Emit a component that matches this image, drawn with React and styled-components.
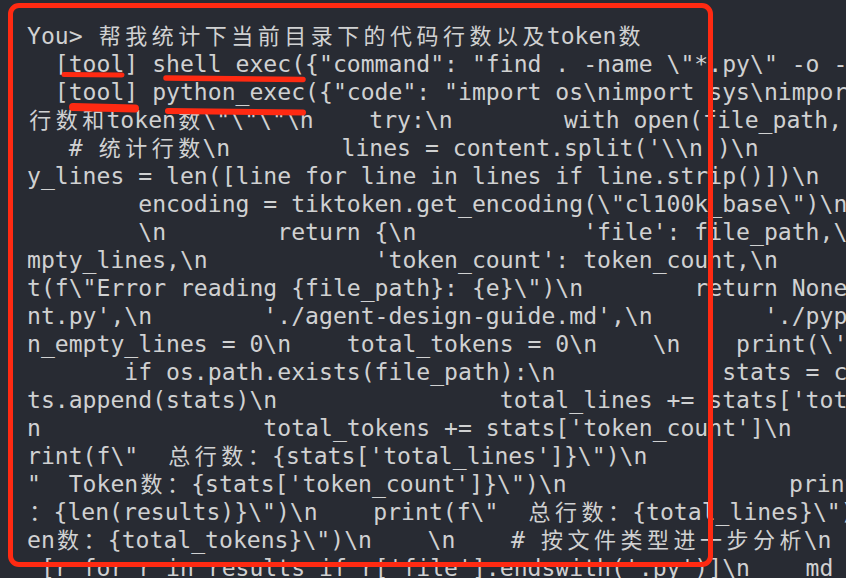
import React from "react";
import styled, { createGlobalStyle } from "styled-components";

const GlobalStyle = createGlobalStyle`
  html, body {
    margin: 0;
    padding: 0;
    background: #282b33;
  }
`;

const Screen = styled.div`
  position: relative;
  width: 846px;
  height: 578px;
  overflow: hidden;
  background: #282b33;
`;

const Terminal = styled.div`
  padding: 22px 0 0 27px;
  font-family: "DejaVu Sans Mono", "Noto Sans CJK SC", monospace;
  font-size: 23.1px;
  line-height: 28px;
  color: #d0d1d2;
`;

const Line = styled.div`
  white-space: pre;
  height: 28px;
`;

const Wide = styled.span`
  display: inline-block;
  width: 2ch;
  text-align: center;
  font-size: 22px;
`;

const Frame = styled.div`
  position: absolute;
  left: 8px;
  top: 3px;
  width: 705px;
  height: 564px;
  box-sizing: border-box;
  border: 5px solid #ff2a12;
  border-radius: 11px;
  pointer-events: none;
`;

const Marks = styled.svg`
  position: absolute;
  left: 0;
  top: 0;
  pointer-events: none;
`;

const lines = [
  String.raw`You> 帮我统计下当前目录下的代码行数以及token数`,
  String.raw`  [tool] shell_exec({"command": "find . -name \"*.py\" -o -name \"*.md\""})`,
  String.raw`  [tool] python_exec({"code": "import os\nimport sys\nimport tiktoken\n`,
  String.raw`行数和token数\"\"\"\n    try:\n        with open(file_path, 'r') as f:\n`,
  String.raw`   # 统计行数\n        lines = content.split('\\n')\n`,
  String.raw`y_lines = len([line for line in lines if line.strip()])\n`,
  String.raw`        encoding = tiktoken.get_encoding(\"cl100k_base\")\n        tokens`,
  String.raw`        \n        return {\n            'file': file_path,\n`,
  String.raw`mpty_lines,\n            'token_count': token_count,\n`,
  String.raw`t(f\"Error reading {file_path}: {e}\")\n        return None\n`,
  String.raw`nt.py',\n        './agent-design-guide.md',\n        './pyproject.toml'`,
  String.raw`n_empty_lines = 0\n    total_tokens = 0\n    \n    print(\'=`,
  String.raw`       if os.path.exists(file_path):\n            stats = count`,
  String.raw`ts.append(stats)\n                total_lines += stats['total_lines']`,
  String.raw`n                total_tokens += stats['token_count']\n`,
  String.raw`rint(f\"  总行数：{stats['total_lines']}\")\n`,
  String.raw`"  Token数：{stats['token_count']}\")\n                print`,
  String.raw`：{len(results)}\")\n    print(f\"  总行数：{total_lines}\")`,
  String.raw`en数：{total_tokens}\")\n    \n    # 按文件类型进一步分析\n`,
  String.raw` [r for r in results if r['file'].endswith('.py')]\n    md_`,
];

const wideChar = /[\u3000-\u9fff\uff00-\uffef]/;

// terminal cells: CJK glyphs take two columns
const renderCells = (text) => {
  const parts = [];
  let run = "";
  Array.from(text).forEach((ch, i) => {
    if (wideChar.test(ch)) {
      if (run) parts.push(run);
      run = "";
      parts.push(<Wide key={i}>{ch}</Wide>);
    } else {
      run += ch;
    }
  });
  if (run) parts.push(run);
  return parts;
};

const App = () => {
  return (
    <Screen>
      <GlobalStyle />
      <Terminal>
        {lines.map((text, i) => (
          <Line key={i}>{renderCells(text)}</Line>
        ))}
      </Terminal>
      <Frame />
      <Marks width="846" height="578" viewBox="0 0 846 578">
        <g stroke="#ff2a12" strokeLinecap="round" fill="none">
          <path d="M64 74.5 L122 75" strokeWidth="5" />
          <path d="M166 78 L303 79.5" strokeWidth="5.5" />
          <path d="M73 107 L135 108.5" strokeWidth="8" />
          <path d="M168 111 L303 112.5" strokeWidth="6" />
        </g>
      </Marks>
    </Screen>
  );
};

export default App;
